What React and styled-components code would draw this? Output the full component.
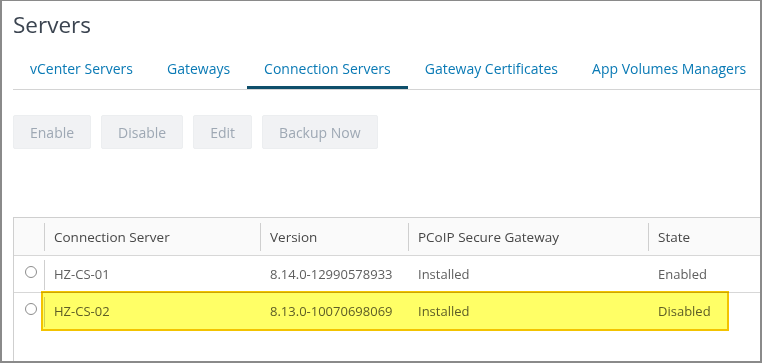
import React from 'react'
import styled, { createGlobalStyle } from 'styled-components'

const GlobalStyle = createGlobalStyle`
    html, body {
        margin: 0;
        padding: 0;
        background: #fff;
    }
    body {
        font-family: "Open Sans", "Liberation Sans", sans-serif;
    }
`

const Frame = styled.div`
    box-sizing: border-box;
    width: 762px;
    height: 363px;
    border-style: solid;
    border-color: #8a8a8a;
    border-width: 1px 2px 2px 2px;
    padding: 9px 0 0 11px;
    display: flex;
    flex-direction: column;
    overflow: hidden;
    background: #fff;
`
const Title = styled.h1`
    margin: 0;
    font-size: 22.5px;
    line-height: 30px;
    font-weight: 400;
    color: #3b4450;
`
const TabBar = styled.div`
    display: flex;
    margin-top: 8px;
    border-bottom: 1px solid #d4d4d4;
`
const Tab = styled.div`
    height: 41px;
    box-sizing: border-box;
    padding: 0 17px;
    display: flex;
    align-items: center;
    font-size: 14px;
    line-height: 20px;
    color: #0a7ab5;
    white-space: nowrap;
    box-shadow: ${props => props.active ? "inset 0 -3px 0 #0e4f6b" : "none"};
`
const Toolbar = styled.div`
    display: flex;
    gap: 10px;
    margin-top: 25px;
`
const Button = styled.button`
    height: 34px;
    box-sizing: border-box;
    padding: 0 16px;
    border: 1px solid #eceef0;
    border-radius: 2px;
    background: #f1f2f4;
    color: #9ea8b4;
    font-family: inherit;
    font-size: 14px;
`
const Table = styled.div`
    margin-top: 68px;
    flex: 1;
    width: 900px;
    border-top: 1px solid #cfcfcf;
    border-left: 1px solid #cfcfcf;
`
const Row = styled.div`
    position: relative;
    display: grid;
    grid-template-columns: 30px 216px 148px 240px 1fr;
    height: ${props => props.head ? "37px" : "36px"};
    background: ${props => props.head ? "#fafafa" : "transparent"};
    border-bottom: ${props => props.last ? "none" : "1px solid #d7d7d7"};
    font-size: ${props => props.head ? "13.5px" : "13px"};
    color: ${props => props.head ? "#474747" : "#5e5e5e"};
`
const Cell = styled.div`
    position: relative;
    display: flex;
    align-items: center;
    padding-left: 10px;
    white-space: nowrap;
    &::before {
        content: "";
        position: absolute;
        left: 0;
        top: ${props => props.head ? "5px" : "4px"};
        bottom: ${props => props.head ? "4px" : "2px"};
        width: 1px;
        background: #cfcfcf;
        display: ${props => props.sep ? "block" : "none"};
    }
`
const RadioCell = styled.div`
    display: flex;
    justify-content: center;
    padding-top: 10px;
    padding-left: 3px;
`
const Radio = styled.span`
    box-sizing: border-box;
    width: 12px;
    height: 12px;
    border: 1px solid #8d8d8d;
    border-radius: 50%;
    background: #fff;
`
const Highlight = styled.div`
    position: absolute;
    left: 27px;
    top: -2px;
    width: 688px;
    height: 40px;
    box-sizing: border-box;
    border: 2px solid #f3c300;
    background: #ffff66;
    mix-blend-mode: multiply;
    pointer-events: none;
`

const tabs = ["vCenter Servers", "Gateways", "Connection Servers", "Gateway Certificates", "App Volumes Managers"]
const servers = [
    { name: "HZ-CS-01", version: "8.14.0-12990578933", pcoip: "Installed", state: "Enabled" },
    { name: "HZ-CS-02", version: "8.13.0-10070698069", pcoip: "Installed", state: "Disabled", marked: true },
]

const App = () => {
    return (
        <>
            <GlobalStyle />
            <Frame>
                <Title>Servers</Title>
                <TabBar>
                    {tabs.map(t => <Tab key={t} active={t === "Connection Servers"}>{t}</Tab>)}
                </TabBar>
                <Toolbar>
                    <Button>Enable</Button>
                    <Button>Disable</Button>
                    <Button>Edit</Button>
                    <Button>Backup Now</Button>
                </Toolbar>
                <Table>
                    <Row head>
                        <Cell head />
                        <Cell head sep>Connection Server</Cell>
                        <Cell head sep>Version</Cell>
                        <Cell head sep>PCoIP Secure Gateway</Cell>
                        <Cell head sep>State</Cell>
                    </Row>
                    {servers.map((s, i) => (
                        <Row key={s.name} last={i === servers.length - 1}>
                            <RadioCell><Radio /></RadioCell>
                            <Cell sep>{s.name}</Cell>
                            <Cell>{s.version}</Cell>
                            <Cell>{s.pcoip}</Cell>
                            <Cell>{s.state}</Cell>
                            {s.marked && <Highlight />}
                        </Row>
                    ))}
                </Table>
            </Frame>
        </>
    )
}

export default App
